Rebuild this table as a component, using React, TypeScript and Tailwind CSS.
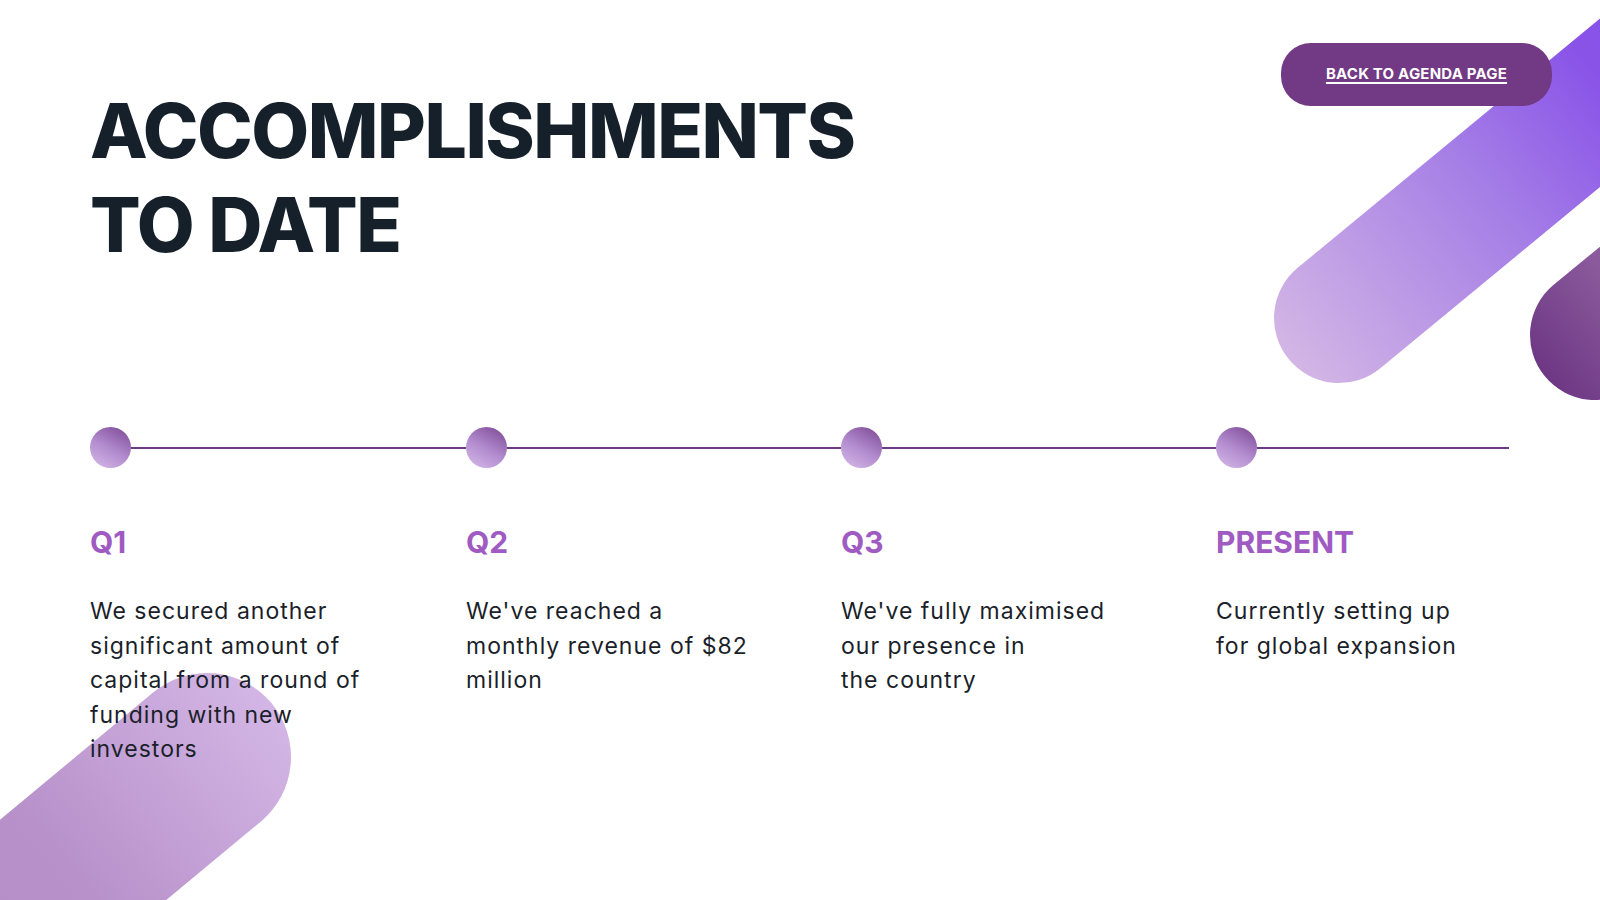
import React from "react";

const items = [
  { label: "Q1", lines: ["We secured another", "significant amount of", "capital from a round of", "funding with new", "investors"] },
  { label: "Q2", lines: ["We've reached a", "monthly revenue of $82", "million"] },
  { label: "Q3", lines: ["We've fully maximised", "our presence in", "the country"] },
  { label: "PRESENT", lines: ["Currently setting up", "for global expansion"] },
];

export default function App() {
  return (
    <div className="relative w-full h-[900px] overflow-hidden bg-white" style={{ fontFamily: "Inter, 'Noto Sans', sans-serif" }}>
      {/* decorative pills */}
      <div
        className="absolute left-[1274px] top-[253px] w-[700px] h-[130px] rounded-full origin-[65px_65px] rotate-[-39.5deg] bg-[linear-gradient(to_right,#d3b6e5_0px,#a57ee6_260px,#8953e8_420px,#8450e9_700px)]"
      />
      <div
        className="absolute left-[1530px] top-[270px] w-[400px] h-[130px] rounded-full origin-[65px_65px] rotate-[-39.5deg] bg-[linear-gradient(to_right,#6e3784_0px,#8a5a9c_110px,#9466a6_300px)]"
      />
      <div
        className="absolute left-[123px] top-[673px] w-[600px] h-[168px] rounded-full origin-[84px_84px] rotate-[140.3deg] bg-[linear-gradient(to_right,#d3b6e5_0px,#b891ca_260px,#b089c4_600px)]"
      />

      <div className="relative z-10 flex flex-col pl-[90px]">
        <div className="flex justify-between items-start">
          <h1 className="pt-[84px] text-[75px] leading-[94px] font-extrabold text-[#16202a] tracking-[-1.5px]">
            ACCOMPLISHMENTS
            <br />
            TO DATE
          </h1>
          <button className="mt-[43px] mr-[48px] w-[271px] h-[63px] rounded-[30px] bg-[#723984] flex items-center justify-center">
            <span className="text-white text-[15px] font-bold underline underline-offset-[3px] decoration-[1.5px] tracking-[0.2px]">
              BACK TO AGENDA PAGE
            </span>
          </button>
        </div>

        <div className="mt-[155px] grid grid-cols-[376px_375px_375px_293px]">
          {items.map((it, i) => (
            <div key={i} className="flex flex-col">
              <div className="flex items-center h-[41px]">
                <div className="w-[41px] h-[41px] shrink-0 rounded-full bg-[linear-gradient(30deg,#d6bbe9_0%,#b48ed0_45%,#7a4592_100%)]" />
                <div className="flex-1 h-[2px] bg-[#6f3a85]" />
              </div>
              <div className="mt-[56px] text-[30px] leading-[36px] font-bold text-[#a05bc3]">{it.label}</div>
              <div className="mt-[34px] text-[23px] leading-[34.5px] text-[#1b1f2a] tracking-[1px]">
                {it.lines.map((l, j) => (
                  <div key={j}>{l}</div>
                ))}
              </div>
            </div>
          ))}
        </div>
      </div>
    </div>
  );
}
